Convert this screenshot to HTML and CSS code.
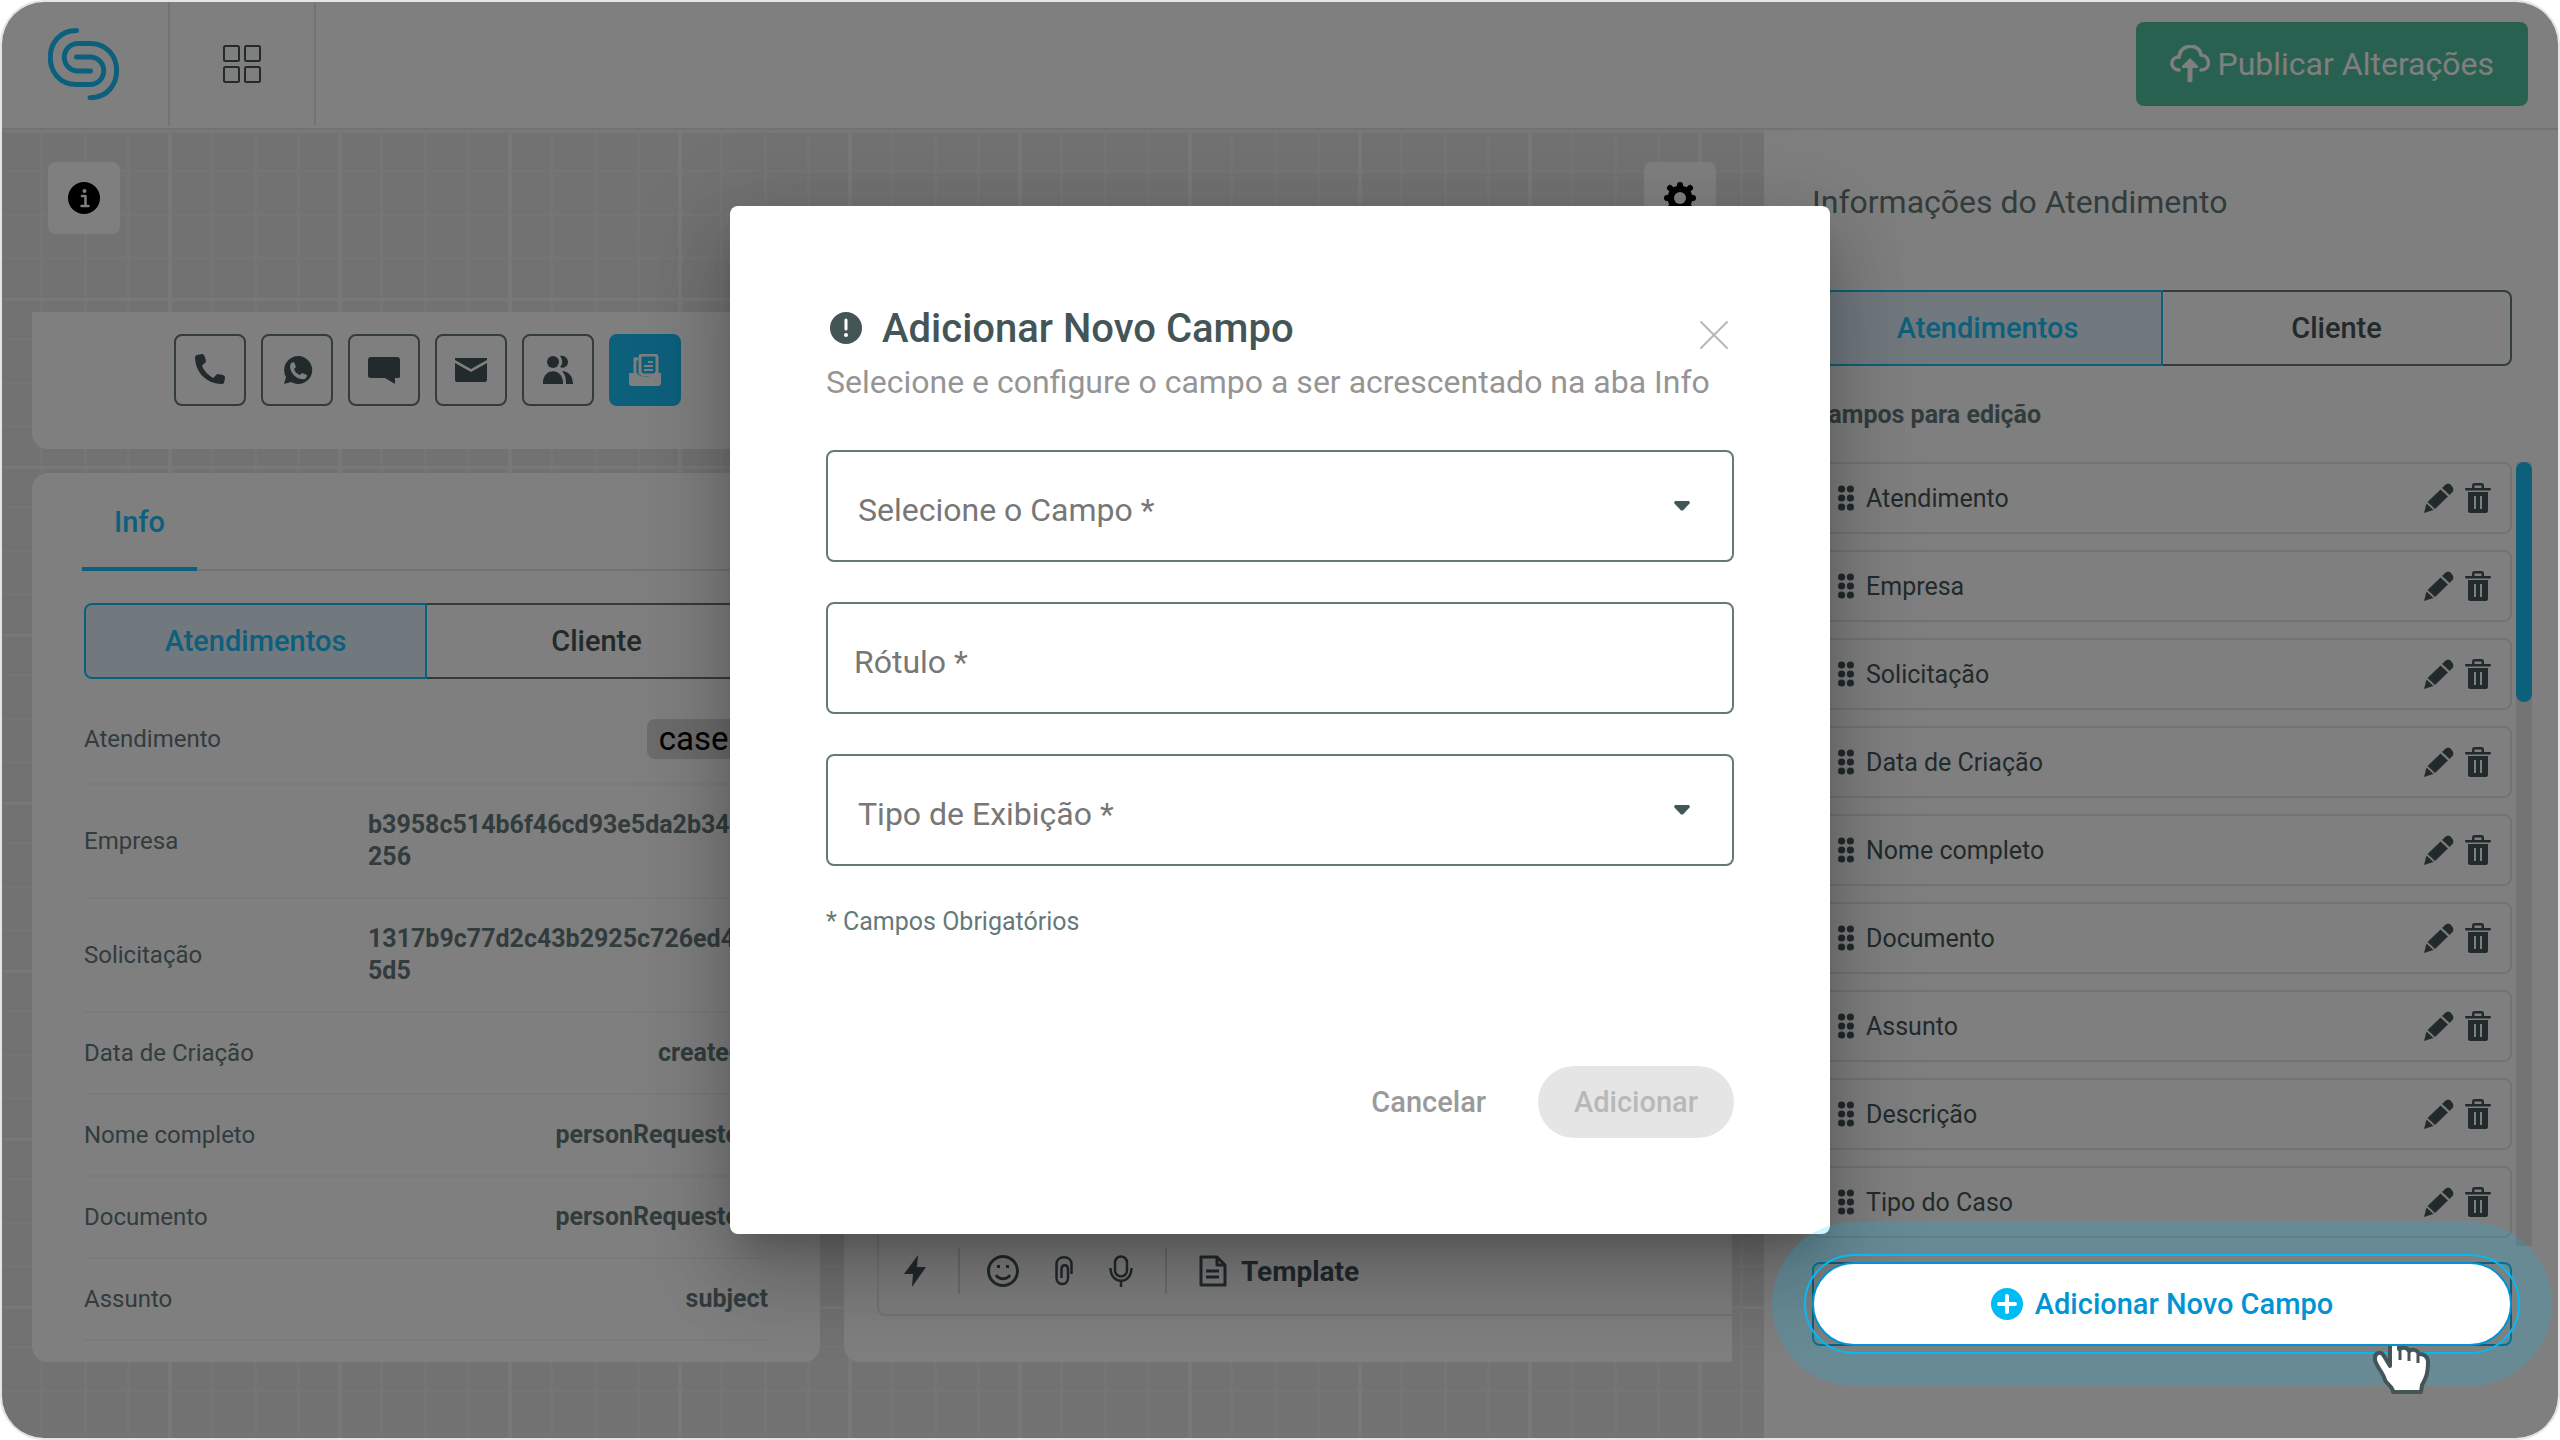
FILE: index.html
```html
<!DOCTYPE html>
<html lang="pt-BR">
  <head>
    <meta charset="UTF-8" />
    <meta name="viewport" content="width=device-width, initial-scale=1.0" />
    <title>Informações do Atendimento</title>
    <link rel="stylesheet" href="styles.css">
  </head>

  <body>
    <!-- shared icons -->
    <svg class="icon-defs" aria-hidden="true">
      <symbol id="drag" viewBox="0 0 16 26">
        <circle cx="3.600" cy="4" r="3.600" />
        <circle cx="12.400" cy="4" r="3.600" />
        <circle cx="3.600" cy="13" r="3.600" />
        <circle cx="12.400" cy="13" r="3.600" />
        <circle cx="3.600" cy="22" r="3.600" />
        <circle cx="12.400" cy="22" r="3.600" />
      </symbol>
      <symbol id="pencil" viewBox="0 0 30 30">
        <path d="M18 5L21 2C23 0 25 0 27 2L28.500 4C30 6 29.500 8 28 9.500L25.500 12Z" />
        <path d="M16.500 6.500L24 13.500L11 26L3.500 19Z" />
        <path d="M2.500 20.500L9.500 27L0 30Z" />
      </symbol>
      <symbol id="trash" viewBox="0 0 26 30">
        <path d="M1 5H7V2.500C7 1 8 0 9.500 0H16.500C18 0 19 1 19 2.500V5H25C26.300 5 26.300 7.500 25 7.500H1C-.300 7.500-.300 5 1 5ZM9.500 5H16.500V2.500H9.500Z" fill-rule="evenodd" />
        <path d="M3 9H23V28C23 29.300 22 30 21 30H5C4 30 3 29.300 3 28ZM9 13V26H11V13ZM15 13V26H17V13Z" fill-rule="evenodd" />
      </symbol>
    </svg>

    <div class="app">
      <header class="header">
        <a class="header-cell logo-cell" href="#" aria-label="Início">
          <svg class="logo" viewBox="48 28 72 72">
            <path d="M76.500 30.500C41.500 30.500 41.500 84.500 76.500 84.500H90A13.600 13.600 0 0 0 90 57H76.500" />
            <path d="M90 97.700C125.500 97.700 125.500 43.500 90 43.500H78A13.600 13.600 0 0 0 78 71H90.500" />
          </svg>
        </a>
        <button class="header-cell apps-cell" aria-label="Aplicativos">
          <svg class="apps-icon" viewBox="0 0 38 38">
            <rect x="1" y="1" width="15" height="15" rx="1.500" />
            <rect x="22" y="1" width="15" height="15" rx="1.500" />
            <rect x="1" y="22" width="15" height="15" rx="1.500" />
            <rect x="22" y="22" width="15" height="15" rx="1.500" />
          </svg>
        </button>
        <button class="publish-button">
          <svg class="cloud-icon" viewBox="0 0 40 38">
            <path d="M9 25C-1 24 0 12 9 12C10 -2 30 -2 31 10C41 11 41 25 31 25" fill="none" stroke="currentColor" stroke-width="3.500" stroke-linecap="round" />
            <path d="M20 13L28 21C28.500 22 28 23 27 23H22.500V35.500C22.500 38 17.500 38 17.500 35.500V23H13C12 23 11.500 22 12 21Z" fill="currentColor" />
          </svg>
          Publicar Alterações
        </button>
      </header>

      <main class="workspace">
        <section class="canvas">
          <div class="canvas-toolbar">
            <button class="tool-button" aria-label="Informações">
              <svg class="tool-icon" viewBox="0 0 32 32">
                <circle cx="16" cy="16" r="16" />
                <circle cx="16.500" cy="9" r="2" fill="#fff" />
                <path d="M14 14H17.500V23.500M13.500 24H20.500" fill="none" stroke="#fff" stroke-width="2.500" stroke-linecap="round" stroke-linejoin="round" />
              </svg>
            </button>
            <button class="tool-button" aria-label="Configurações">
              <svg class="tool-icon" viewBox="0 0 32 32">
                <circle cx="16" cy="16" r="9" fill="none" stroke="#000" stroke-width="7" />
                <path d="M16 3V29M3 16H29M6 6L26 26M26 6L6 26" fill="none" stroke="#000" stroke-width="6" stroke-linecap="round" />
                <circle cx="16" cy="16" r="6" fill="#fff" />
              </svg>
            </button>
          </div>

          <div class="channels">
            <button class="channel" aria-label="Telefone">
              <svg viewBox="0 0 32 32">
                <path d="M3 1L8 0C10 0 11 2 12 7C12 9 9 10 8 12C10 17 14 21 19 24C21 23 22 20 24 20L29 21C31 22 31 23 31 24L30 29C29 30 28 30 27 30C12 29 2 19 1 4C1 2 2 1 3 1Z" />
              </svg>
            </button>
            <button class="channel" aria-label="WhatsApp">
              <svg viewBox="0 0 32 32">
                <path d="M17 2A14 14 0 1 1 10 28L3 30L5 23A14 14 0 0 1 17 2Z" />
                <path d="M10 9L13 8L15 13L13 15C14 18 16 20 19 21L21 19L26 21C26 25 23 26 20 25C14 24 9 18 9 12Z" fill="#fff" />
              </svg>
            </button>
            <button class="channel" aria-label="Chat">
              <svg viewBox="0 0 32 32">
                <path d="M3 3H29C31 3 32 4 32 6V22C32 24 31 24 30 24H27V30L17 24H3C1 24 0 23 0 22V6C0 4 1 3 3 3Z" />
              </svg>
            </button>
            <button class="channel" aria-label="E-mail">
              <svg viewBox="0 0 32 32">
                <path d="M0 4H32V6L16 15L0 6ZM0 9L16 18L32 9V26C32 27 31 28 30 28H2C1 28 0 27 0 26Z" />
              </svg>
            </button>
            <button class="channel" aria-label="Grupo">
              <svg viewBox="0 0 32 32">
                <circle cx="11" cy="8" r="6" />
                <path d="M18 2C23 1 26 5 26 8C26 12 22 15 18 13C21 10 21 6 18 2ZM1 30V27C3 14 19 14 21 27V30ZM20 17C26 17 31 22 31 30H24C24 24 23 20 20 17Z" />
              </svg>
            </button>
            <button class="channel channel-active" aria-label="Formulário">
              <svg viewBox="0 0 32 32">
                <path d="M11 19V3C11 1 12 1 13 1H26C28 1 28 2 28 3V19L25 21H14ZM6 19V5H9" fill="none" stroke="#fff" stroke-width="3" />
                <path d="M19 8H24M15 12H24M15 16H24" stroke="#fff" stroke-width="2" />
                <path d="M0 19H8C10 24 24 24 25 19H32V29C32 31 31 32 29 32H3C1 32 0 31 0 29Z" fill="#fff" />
              </svg>
            </button>
          </div>

          <div class="panels">
            <section class="info-panel">
              <nav class="info-tabs">
                <button class="info-tab">Info</button>
              </nav>
              <div class="segmented">
                <button class="segment segment-active">Atendimentos</button>
                <button class="segment">Cliente</button>
              </div>
              <dl class="info-list">
                <div class="info-row">
                  <dt>Atendimento</dt>
                  <dd><span class="chip">caseId</span></dd>
                </div>
                <div class="info-row">
                  <dt>Empresa</dt>
                  <dd class="long-value">b3958c514b6f46cd93e5da2b3404<br />256</dd>
                </div>
                <div class="info-row">
                  <dt>Solicitação</dt>
                  <dd class="long-value">1317b9c77d2c43b2925c726ed4<br />5d5</dd>
                </div>
                <div class="info-row">
                  <dt>Data de Criação</dt>
                  <dd>createdAt</dd>
                </div>
                <div class="info-row">
                  <dt>Nome completo</dt>
                  <dd>personRequester...</dd>
                </div>
                <div class="info-row">
                  <dt>Documento</dt>
                  <dd>personRequester...</dd>
                </div>
                <div class="info-row">
                  <dt>Assunto</dt>
                  <dd>subject</dd>
                </div>
              </dl>
            </section>

            <section class="chat-panel">
              <div class="composer">
                <button class="composer-button bolt-button" aria-label="Respostas rápidas">
                  <svg width="22" height="32" viewBox="0 0 22 32">
                    <path d="M14 0L0 19H9L8 32L22 12H13Z" fill="#445558" />
                  </svg>
                </button>
                <div class="composer-group">
                  <button class="composer-button" aria-label="Emoji">
                    <svg width="32" height="32" viewBox="0 0 32 32">
                      <circle cx="16" cy="16" r="14.500" />
                      <path d="M11.500 10V13M20.500 10V13M9 20C12 25 20 25 23 20" />
                    </svg>
                  </button>
                  <button class="composer-button" aria-label="Anexo">
                    <svg width="18" height="30" viewBox="0 0 18 30">
                      <path d="M16.500 18V8C16.500-1 1.500-1 1.500 8V22C1.500 30 13 30 13 22V13C13 8 6.500 8 6.500 13V22" stroke-width="2.500" />
                    </svg>
                  </button>
                  <button class="composer-button" aria-label="Áudio">
                    <svg width="24" height="32" viewBox="0 0 24 32">
                      <rect x="6" y="1.500" width="12" height="20" rx="6" stroke-width="2.500" />
                      <path d="M1.500 13C1.500 30 22.500 30 22.500 13M12 26V32" stroke-width="2.500" />
                    </svg>
                  </button>
                </div>
                <button class="composer-button template-button">
                  <svg width="28" height="32" viewBox="0 0 28 32">
                    <path d="M2 2H18L26 10V30H2ZM18 2V10H26ZM7 16H20M7 22H20" />
                  </svg>
                  Template
                </button>
              </div>
            </section>
          </div>
        </section>

        <aside class="sidebar">
          <h2 class="sidebar-title">Informações do Atendimento</h2>
          <div class="segmented">
            <button class="segment segment-active">Atendimentos</button>
            <button class="segment">Cliente</button>
          </div>
          <h3 class="sidebar-subtitle">Campos para edição</h3>
          <div class="field-scroller">
            <ul class="field-list">
              <li class="field-item">
                <svg class="drag-icon"><use href="#drag" /></svg>
                <span class="field-name">Atendimento</span>
                <button class="icon-button" aria-label="Editar"><svg class="pencil-icon"><use href="#pencil" /></svg></button>
                <button class="icon-button" aria-label="Excluir"><svg class="trash-icon"><use href="#trash" /></svg></button>
              </li>
              <li class="field-item">
                <svg class="drag-icon"><use href="#drag" /></svg>
                <span class="field-name">Empresa</span>
                <button class="icon-button" aria-label="Editar"><svg class="pencil-icon"><use href="#pencil" /></svg></button>
                <button class="icon-button" aria-label="Excluir"><svg class="trash-icon"><use href="#trash" /></svg></button>
              </li>
              <li class="field-item">
                <svg class="drag-icon"><use href="#drag" /></svg>
                <span class="field-name">Solicitação</span>
                <button class="icon-button" aria-label="Editar"><svg class="pencil-icon"><use href="#pencil" /></svg></button>
                <button class="icon-button" aria-label="Excluir"><svg class="trash-icon"><use href="#trash" /></svg></button>
              </li>
              <li class="field-item">
                <svg class="drag-icon"><use href="#drag" /></svg>
                <span class="field-name">Data de Criação</span>
                <button class="icon-button" aria-label="Editar"><svg class="pencil-icon"><use href="#pencil" /></svg></button>
                <button class="icon-button" aria-label="Excluir"><svg class="trash-icon"><use href="#trash" /></svg></button>
              </li>
              <li class="field-item">
                <svg class="drag-icon"><use href="#drag" /></svg>
                <span class="field-name">Nome completo</span>
                <button class="icon-button" aria-label="Editar"><svg class="pencil-icon"><use href="#pencil" /></svg></button>
                <button class="icon-button" aria-label="Excluir"><svg class="trash-icon"><use href="#trash" /></svg></button>
              </li>
              <li class="field-item">
                <svg class="drag-icon"><use href="#drag" /></svg>
                <span class="field-name">Documento</span>
                <button class="icon-button" aria-label="Editar"><svg class="pencil-icon"><use href="#pencil" /></svg></button>
                <button class="icon-button" aria-label="Excluir"><svg class="trash-icon"><use href="#trash" /></svg></button>
              </li>
              <li class="field-item">
                <svg class="drag-icon"><use href="#drag" /></svg>
                <span class="field-name">Assunto</span>
                <button class="icon-button" aria-label="Editar"><svg class="pencil-icon"><use href="#pencil" /></svg></button>
                <button class="icon-button" aria-label="Excluir"><svg class="trash-icon"><use href="#trash" /></svg></button>
              </li>
              <li class="field-item">
                <svg class="drag-icon"><use href="#drag" /></svg>
                <span class="field-name">Descrição</span>
                <button class="icon-button" aria-label="Editar"><svg class="pencil-icon"><use href="#pencil" /></svg></button>
                <button class="icon-button" aria-label="Excluir"><svg class="trash-icon"><use href="#trash" /></svg></button>
              </li>
              <li class="field-item">
                <svg class="drag-icon"><use href="#drag" /></svg>
                <span class="field-name">Tipo do Caso</span>
                <button class="icon-button" aria-label="Editar"><svg class="pencil-icon"><use href="#pencil" /></svg></button>
                <button class="icon-button" aria-label="Excluir"><svg class="trash-icon"><use href="#trash" /></svg></button>
              </li>
            </ul>
            <div class="scroll-track"><div class="scroll-thumb"></div></div>
          </div>

          <div class="add-field">
            <button class="add-field-button">
              <svg class="plus-icon" viewBox="0 0 32 32">
                <circle cx="16" cy="16" r="16" fill="#00bcf6" />
                <path d="M16 8V24M8 16H24" stroke="#fff" stroke-width="4" stroke-linecap="round" />
              </svg>
              Adicionar Novo Campo
            </button>
            <svg class="hand-pointer" viewBox="0 0 57 48">
              <path d="M17-3V20L11 10C8 4 1 7 2 14C4 22 10 26 12 34C14 39 20 40 20 46H48L49 39C53 32 55 28 55 15C54 9 50 8 46 8C44 3 39 3 36 5C34 1 30 1 26 3V-3Z" fill="#fff" stroke="#445558" stroke-width="4" stroke-linejoin="round" />
              <path d="M27 2V14M36 5V15M45 8V17" stroke="#445558" stroke-width="3" />
            </svg>
          </div>
        </aside>
      </main>

      <div class="backdrop">
        <form class="modal" role="dialog" aria-labelledby="modal-title">
          <div class="modal-header">
            <svg class="alert-icon" viewBox="0 0 32 32">
              <circle cx="16" cy="16" r="16" fill="#445558" />
              <path d="M16 8V17" stroke="#fff" stroke-width="3" stroke-linecap="round" />
              <circle cx="16" cy="23" r="2" fill="#fff" />
            </svg>
            <h1 class="modal-title" id="modal-title">Adicionar Novo Campo</h1>
            <button type="button" class="close-button" aria-label="Fechar">
              <svg width="28" height="28" viewBox="0 0 28 28">
                <path d="M1 1L27 27M27 1L1 27" stroke="#b8b8b8" stroke-width="2" stroke-linecap="round" />
              </svg>
            </button>
          </div>
          <p class="modal-subtitle">Selecione e configure o campo a ser acrescentado na aba Info</p>

          <div class="form-field">
            <select id="campo" class="form-control"><option></option></select>
            <label class="form-label" for="campo">Selecione o Campo *</label>
            <svg class="select-arrow" viewBox="0 0 16 10"><path d="M1 0H15L16 2L9 9.500H7L0 2Z" /></svg>
          </div>
          <div class="form-field">
            <input id="rotulo" class="form-control" type="text" />
            <label class="form-label" for="rotulo">Rótulo *</label>
          </div>
          <div class="form-field">
            <select id="tipo" class="form-control"><option></option></select>
            <label class="form-label" for="tipo">Tipo de Exibição *</label>
            <svg class="select-arrow" viewBox="0 0 16 10"><path d="M1 0H15L16 2L9 9.500H7L0 2Z" /></svg>
          </div>
          <p class="form-note">* Campos Obrigatórios</p>

          <div class="modal-footer">
            <button type="button" class="cancel-button">Cancelar</button>
            <button type="submit" class="submit-button" disabled>Adicionar</button>
          </div>
        </form>
      </div>
    </div>
  </body>
</html>
```

FILE: styles.css
```css
* {
  box-sizing: border-box;
}

body {
  margin: 0;
  font-family: Roboto, "Liberation Sans", sans-serif;
  font-size: 25px;
  color: #445558;
  background-color: white;
}

h1, h2, h3, p, dl, dd, ul {
  margin: 0;
  padding: 0;
}

button {
  font-family: inherit;
  color: inherit;
  background: none;
  border: none;
  padding: 0;
  cursor: pointer;
}

svg {
  display: block;
  flex-shrink: 0;
}

.icon-defs {
  position: absolute;
  width: 0;
  height: 0;
}

.app {
  position: relative;
  display: flex;
  flex-direction: column;
  min-height: 100vh;
  border: 2px solid #e4e5e5;
  border-radius: 44px;
  overflow: hidden;
  background-color: white;
}

/* Header */
.header {
  display: flex;
  align-items: center;
  height: 128px;
  padding: 0 30px 2px 0;
  border-bottom: 2px solid #e6e6e6;
}

.header-cell {
  display: flex;
  align-items: center;
  justify-content: center;
  height: 100%;
  border-right: 2px solid #e6e6e6;
}

.logo-cell {
  width: 168px;
  padding-right: 2px;
}

.apps-cell {
  width: 146px;
}

.logo {
  width: 72px;
  height: 72px;
  fill: none;
  stroke: #1ac0f8;
  stroke-width: 5;
  stroke-linecap: round;
}

.apps-icon {
  width: 38px;
  height: 38px;
  fill: none;
  stroke: #445558;
  stroke-width: 2;
}

.publish-button {
  display: flex;
  align-items: center;
  gap: 8px;
  height: 84px;
  margin-left: auto;
  padding: 0 34px;
  font-size: 32px;
  color: white;
  background-color: #50c2a1;
  border-radius: 8px;
}

.cloud-icon {
  width: 40px;
  height: 38px;
}

.workspace {
  flex: 1;
  display: grid;
  grid-template-columns: minmax(0, 1fr) 794px;
}

/* Canvas with the grid paper behind it */
.canvas {
  display: flex;
  flex-direction: column;
  padding: 32px 32px 76px 30px;
  background-color: #e4e4e4;
  background-image:
    linear-gradient(to right, #f0f0f0 4px, transparent 4px),
    linear-gradient(to bottom, #f0f0f0 3px, transparent 3px),
    linear-gradient(to right, transparent 42px, #eaeaea 42px, #eaeaea 45px, transparent 45px, transparent 86px, #eaeaea 86px, #eaeaea 89px, transparent 89px, transparent 129px, #eaeaea 129px, #eaeaea 132px, transparent 132px),
    linear-gradient(to bottom, transparent 40px, #eaeaea 40px, #eaeaea 42px, transparent 42px, transparent 84px, #eaeaea 84px, #eaeaea 86px, transparent 86px, transparent 127px, #eaeaea 127px, #eaeaea 129px, transparent 129px);
  background-size: 170px 168px;
  background-position: -4px 0;
}

.canvas-toolbar {
  display: flex;
  justify-content: space-between;
  padding: 0 16px;
}

.tool-button {
  display: flex;
  align-items: center;
  justify-content: center;
  width: 72px;
  height: 72px;
  background-color: white;
  border-radius: 8px;
}

.tool-icon {
  width: 32px;
  height: 32px;
}

.channels {
  display: flex;
  gap: 15px;
  margin-top: 78px;
  padding: 22px 142px 43px;
  background-color: white;
  border-radius: 0 0 16px 16px;
}

.channel {
  display: flex;
  align-items: center;
  justify-content: center;
  width: 72px;
  height: 72px;
  border: 2px solid #65797b;
  border-radius: 8px;
}

.channel svg {
  width: 32px;
  height: 32px;
  fill: #445558;
}

.channel-active {
  background-color: #1ac0f8;
  border-color: #1ac0f8;
}

.panels {
  flex: 1;
  display: grid;
  grid-template-columns: 788fr 888fr;
  gap: 24px;
  margin-top: 24px;
}

/* Info panel */
.info-panel {
  padding: 0 52px 16px;
  background-color: white;
  border-radius: 16px;
}

.info-tabs {
  display: flex;
  height: 98px;
  margin: 0 -2px 32px;
  box-shadow: inset 0 -2px #e6e6e6;
}

.info-tab {
  padding: 4px 32px 0;
  font-size: 29px;
  font-weight: 500;
  color: #1ac0f8;
  border-bottom: 4px solid #1ac0f8;
}

.segmented {
  display: flex;
  height: 76px;
}

.segment {
  flex: 1;
  font-size: 29px;
  font-weight: 500;
  border: 2px solid #65797b;
  border-left: none;
  border-radius: 0 8px 8px 0;
}

.segment-active {
  color: #1ac0f8;
  background-color: #e3f3ff;
  border: 2px solid #1ac0f8;
  border-radius: 8px 0 0 8px;
}

.info-list {
  margin-top: 16px;
  color: #65797b;
}

.info-row {
  display: flex;
  align-items: center;
  justify-content: space-between;
  padding: 24px 0;
  line-height: 32px;
  border-bottom: 2px solid #f7f7f7;
}

.info-row dt {
  font-size: 24px;
}

.info-row dd {
  font-weight: 700;
}

.info-row .long-value {
  width: 400px;
}

.chip {
  display: block;
  padding: 4px 12px;
  font-size: 33px;
  font-weight: 400;
  color: black;
  background-color: #d8d8d8;
  border-radius: 8px;
}

/* Chat panel */
.chat-panel {
  display: flex;
  flex-direction: column;
  justify-content: flex-end;
  padding: 0 0 46px 33px;
  background-color: white;
  border-radius: 16px 0 0 16px;
}

.composer {
  display: flex;
  align-items: center;
  height: 88px;
  padding-left: 25px;
  border-left: 2px solid #e9e9e9;
  border-bottom: 2px solid #e6e6e6;
  border-radius: 0 0 0 8px;
}

.composer-button svg {
  fill: none;
  stroke: #445558;
  stroke-width: 3;
  stroke-linejoin: round;
}

.bolt-button svg {
  stroke: none;
}

.composer-group {
  display: flex;
  align-items: center;
  gap: 36px;
  height: 46px;
  margin: 0 32px;
  padding: 0 32px 0 27px;
  border-left: 2px solid #dddddd;
  border-right: 2px solid #dddddd;
}

.template-button {
  display: flex;
  align-items: center;
  gap: 14px;
  font-size: 28px;
  font-weight: 700;
}

/* Sidebar */
.sidebar {
  padding: 52px 26px 0 48px;
  background-color: white;
}

.sidebar-title {
  font-size: 32px;
  font-weight: 400;
  line-height: 40px;
  color: #65797b;
}

.sidebar .segmented {
  margin: 68px 20px 32px 0;
}

.sidebar-subtitle {
  margin-bottom: 30px;
  font-size: 25px;
  font-weight: 700;
  line-height: 34px;
  color: #65797b;
}

.field-scroller {
  display: flex;
  gap: 4px;
}

.field-list {
  flex: 1;
  display: flex;
  flex-direction: column;
  gap: 16px;
  padding-bottom: 8px;
  list-style: none;
}

.field-item {
  display: flex;
  align-items: center;
  height: 72px;
  padding: 0 19px 0 24px;
  border: 2px solid #e6e6e6;
  border-radius: 8px;
}

.drag-icon {
  width: 16px;
  height: 26px;
  margin-right: 12px;
  fill: #445558;
}

.field-name {
  flex: 1;
}

.icon-button {
  margin-left: 11px;
}

.pencil-icon {
  width: 30px;
  height: 30px;
  fill: #445558;
}

.trash-icon {
  width: 26px;
  height: 30px;
  fill: #445558;
}

.scroll-track {
  width: 16px;
  background-color: #e6e6e6;
}

.scroll-thumb {
  height: 240px;
  background-color: #1ac0f8;
  border-radius: 8px;
}

.add-field {
  position: relative;
  height: 84px;
  margin: 16px 20px 0 0;
  border: 2px solid #1ac0f8;
  border-radius: 8px;
}

/* Highlighted button, sits above the backdrop */
.add-field-button {
  position: absolute;
  inset: -2px;
  z-index: 20;
  display: flex;
  align-items: center;
  justify-content: center;
  gap: 12px;
  font-size: 29px;
  font-weight: 500;
  color: #0094d4;
  background-color: white;
  border: 2px solid #0094d4;
  border-radius: 42px;
}

.add-field-button::after {
  content: "";
  position: absolute;
  inset: -10px;
  border: 2px solid #00bcf6;
  border-radius: 50px;
  box-shadow: 0 0 0 32px rgba(0, 188, 246, 0.18);
}

.plus-icon {
  width: 32px;
  height: 32px;
}

.hand-pointer {
  position: absolute;
  right: 80px;
  top: 82px;
  z-index: 21;
  width: 57px;
  height: 48px;
}

/* Modal */
.backdrop {
  position: absolute;
  inset: 0;
  z-index: 10;
  display: flex;
  align-items: center;
  justify-content: center;
  background-color: rgba(0, 0, 0, 0.5);
}

.modal {
  width: 1100px;
  padding: 96px;
  background-color: white;
  border-radius: 8px;
  box-shadow: 0 22px 30px -14px rgba(0, 0, 0, 0.2),
    0 48px 76px 6px rgba(0, 0, 0, 0.14),
    0 18px 92px 16px rgba(0, 0, 0, 0.12);
}

.modal-header {
  display: flex;
  align-items: center;
  height: 52px;
  padding: 0 6px 0 4px;
}

.alert-icon {
  width: 32px;
  height: 32px;
  margin-right: 20px;
}

.modal-title {
  flex: 1;
  font-size: 40px;
  font-weight: 500;
}

.close-button {
  padding-top: 14px;
}

.modal-subtitle {
  margin: 4px 0 44px;
  font-size: 32px;
  line-height: 48px;
  color: #959595;
}

.form-field {
  position: relative;
  height: 112px;
  margin-bottom: 40px;
}

.form-control {
  width: 100%;
  height: 100%;
  padding: 8px 28px 0;
  font-family: inherit;
  font-size: 32px;
  color: #445558;
  background-color: white;
  border: 2px solid #65797b;
  border-radius: 8px;
  appearance: none;
}

.form-label {
  position: absolute;
  left: 32px;
  top: 40px;
  font-size: 32px;
  line-height: 40px;
  color: #777777;
  pointer-events: none;
}

input + .form-label {
  left: 28px;
}

.select-arrow {
  position: absolute;
  right: 44px;
  top: 51px;
  width: 16px;
  height: 10px;
  fill: #445558;
  pointer-events: none;
}

.form-note {
  line-height: 32px;
  color: #65797b;
}

.modal-footer {
  display: flex;
  justify-content: flex-end;
  gap: 16px;
  margin-top: 128px;
}

.cancel-button,
.submit-button {
  height: 72px;
  padding: 0 36px;
  font-size: 29px;
  font-weight: 500;
  color: #9a9a9a;
  border-radius: 36px;
}

.submit-button {
  color: #b8b8b8;
  background-color: #e5e5e5;
}
```
